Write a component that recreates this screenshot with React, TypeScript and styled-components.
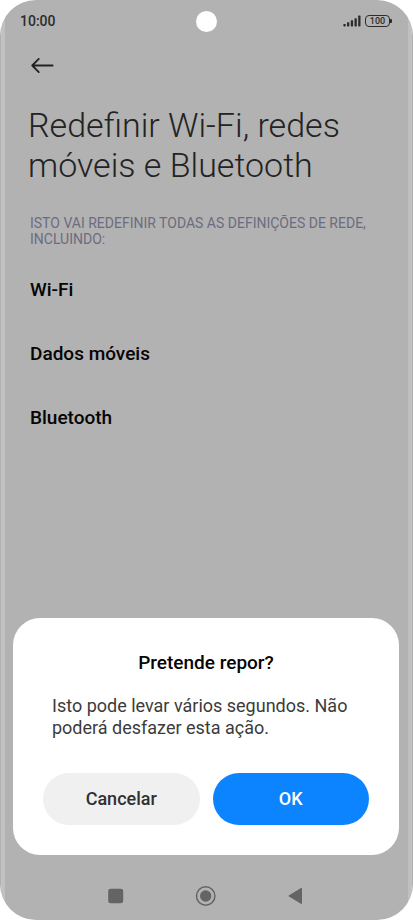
import React from "react";
import styled, { createGlobalStyle } from "styled-components";

const GlobalStyle = createGlobalStyle`
  *, *::before, *::after { box-sizing: border-box; }
  body {
    margin: 0;
    background: #ffffff;
    font-family: Roboto, "Noto Sans", sans-serif;
  }
  h1, h2, p, ul { margin: 0; padding: 0; }
  button { font-family: inherit; border: 0; padding: 0; cursor: pointer; }
`;

const Phone = styled.div`
  display: flex;
  flex-direction: column;
  min-height: 100vh;
  border-radius: 36px;
  overflow: hidden;
  background:
    linear-gradient(to right, #b0b0b0 1px, #c3c3c3 1px, #c0c0c0 5px, transparent 5px) left / 6px 100% no-repeat,
    linear-gradient(to left, #b0b0b0 1px, #c3c3c3 1px, #bebebe 5px, transparent 5px) right / 6px 100% no-repeat,
    #b2b2b2;
`;

const StatusBar = styled.header`
  display: grid;
  grid-template-columns: 1fr auto 1fr;
  align-items: center;
  height: 42px;
  padding: 0 21px 0 20px;
  color: #2c2c2c;
`;

const Clock = styled.time`
  font-size: 14px;
  line-height: 16px;
  font-weight: 500;
`;

const Camera = styled.span`
  width: 21px;
  height: 21px;
  border-radius: 50%;
  background: #ffffff;
`;

const StatusIcons = styled.div`
  display: flex;
  justify-content: flex-end;
  align-items: center;
  gap: 4px;
`;

const Battery = styled.span`
  display: flex;
  align-items: center;

  &::after {
    content: "";
    width: 2px;
    height: 4px;
    border-radius: 0 1px 1px 0;
    background: #2c2c2c;
  }
`;

const BatteryLevel = styled.span`
  width: 25px;
  height: 12px;
  border: 1px solid #2c2c2c;
  border-radius: 4px;
  font-size: 9px;
  line-height: 10px;
  font-weight: 500;
  text-align: center;
`;

const Main = styled.main`
  display: flex;
  flex-direction: column;
  padding: 10px 28px 0;
`;

const BackButton = styled.button`
  display: flex;
  align-items: center;
  justify-content: center;
  width: 28px;
  height: 28px;
  background: none;
  color: #222222;
`;

const Title = styled.h1`
  margin-top: 25px;
  font-size: 34px;
  line-height: 40px;
  font-weight: 300;
  color: #232323;
`;

const Caption = styled.p`
  margin-top: 30px;
  padding-left: 2px;
  font-size: 14px;
  line-height: 16px;
  color: #6c6c80;
`;

const Items = styled.ul`
  display: flex;
  flex-direction: column;
  margin-top: 11px;
  padding-left: 2px;
  list-style: none;
`;

const Item = styled.li`
  padding: 20px 0;
  font-size: 19px;
  line-height: 24px;
  font-weight: 500;
  color: #050505;
`;

const Dialog = styled.section`
  display: flex;
  flex-direction: column;
  margin: auto 14px 0 13px;
  padding: 33px 30px 30px;
  border-radius: 27px;
  background: #ffffff;
`;

const DialogTitle = styled.h2`
  font-size: 19px;
  line-height: 24px;
  font-weight: 500;
  text-align: center;
  color: #050505;
`;

const DialogText = styled.p`
  margin-top: 20px;
  padding: 0 9px;
  font-size: 18px;
  line-height: 22px;
  color: #3b3b3b;
`;

const Actions = styled.div`
  display: flex;
  gap: 13px;
  margin-top: 34px;
`;

const ActionButton = styled.button<{ $primary?: boolean }>`
  flex: 1;
  height: 52px;
  border-radius: 26px;
  font-size: 18px;
  line-height: 22px;
  font-weight: 500;
  background: ${({ $primary }) => ($primary ? "#0d84ff" : "#f0f0f0")};
  color: ${({ $primary }) => ($primary ? "#ffffff" : "#303030")};
`;

const NavBar = styled.nav`
  display: flex;
  justify-content: center;
  align-items: center;
  gap: 62px;
  height: 65px;
  padding: 17px 2px 0 0;
`;

const NavButton = styled.button`
  display: flex;
  align-items: center;
  justify-content: center;
  width: 28px;
  height: 28px;
  background: none;
  color: #646464;
`;

const items = ["Wi-Fi", "Dados móveis", "Bluetooth"];

export default function App() {
  return (
    <>
      <GlobalStyle />
      <Phone>
        <StatusBar>
          <Clock>10:00</Clock>
          <Camera />
          <StatusIcons>
            <svg width="18" height="12" viewBox="0 0 18 12" fill="currentColor" aria-hidden="true">
              <rect x="0.3" y="9" width="2.5" height="2.4" rx="0.8" />
              <rect x="4" y="7.2" width="2.3" height="4.2" rx="0.6" />
              <rect x="7.8" y="5.2" width="2.3" height="6.2" rx="0.6" />
              <rect x="11.5" y="3.2" width="2.3" height="8.2" rx="0.6" />
              <rect x="15.2" y="0.6" width="2.3" height="10.8" rx="0.6" />
            </svg>
            <Battery>
              <BatteryLevel>100</BatteryLevel>
            </Battery>
          </StatusIcons>
        </StatusBar>

        <Main>
          <BackButton aria-label="Voltar">
            <svg width="24" height="18" viewBox="0 0 24 18" fill="none" stroke="currentColor" strokeWidth="1.8" strokeLinecap="round" strokeLinejoin="round" aria-hidden="true">
              <path d="M22.6 8.5H2.2M8.8 1.9L2.2 8.5L8.8 15.1" />
            </svg>
          </BackButton>
          <Title>Redefinir Wi-Fi, redes móveis e Bluetooth</Title>
          <Caption>ISTO VAI REDEFINIR TODAS AS DEFINIÇÕES DE REDE, INCLUINDO:</Caption>
          <Items>
            {items.map((item) => (
              <Item key={item}>{item}</Item>
            ))}
          </Items>
        </Main>

        <Dialog role="dialog" aria-labelledby="dialog-title" aria-describedby="dialog-text">
          <DialogTitle id="dialog-title">Pretende repor?</DialogTitle>
          <DialogText id="dialog-text">
            Isto pode levar vários segundos. Não poderá desfazer esta ação.
          </DialogText>
          <Actions>
            <ActionButton>Cancelar</ActionButton>
            <ActionButton $primary>OK</ActionButton>
          </Actions>
        </Dialog>

        <NavBar>
          <NavButton aria-label="Aplicações recentes">
            <svg width="16" height="16" viewBox="0 0 16 16" fill="currentColor" aria-hidden="true">
              <rect x="0.2" y="0.7" width="15" height="14.6" rx="2.4" />
            </svg>
          </NavButton>
          <NavButton aria-label="Início">
            <svg width="22" height="22" viewBox="0 0 22 22" aria-hidden="true">
              <circle cx="10.7" cy="11" r="9.2" fill="none" stroke="currentColor" strokeWidth="1.5" />
              <circle cx="10.7" cy="11" r="5.7" fill="currentColor" />
            </svg>
          </NavButton>
          <NavButton aria-label="Retroceder">
            <svg width="16" height="18" viewBox="0 0 16 18" fill="currentColor" stroke="currentColor" strokeWidth="1" strokeLinejoin="round" aria-hidden="true">
              <path d="M13.5 1.2V16.6L0.9 8.9Z" />
            </svg>
          </NavButton>
        </NavBar>
      </Phone>
    </>
  );
}
